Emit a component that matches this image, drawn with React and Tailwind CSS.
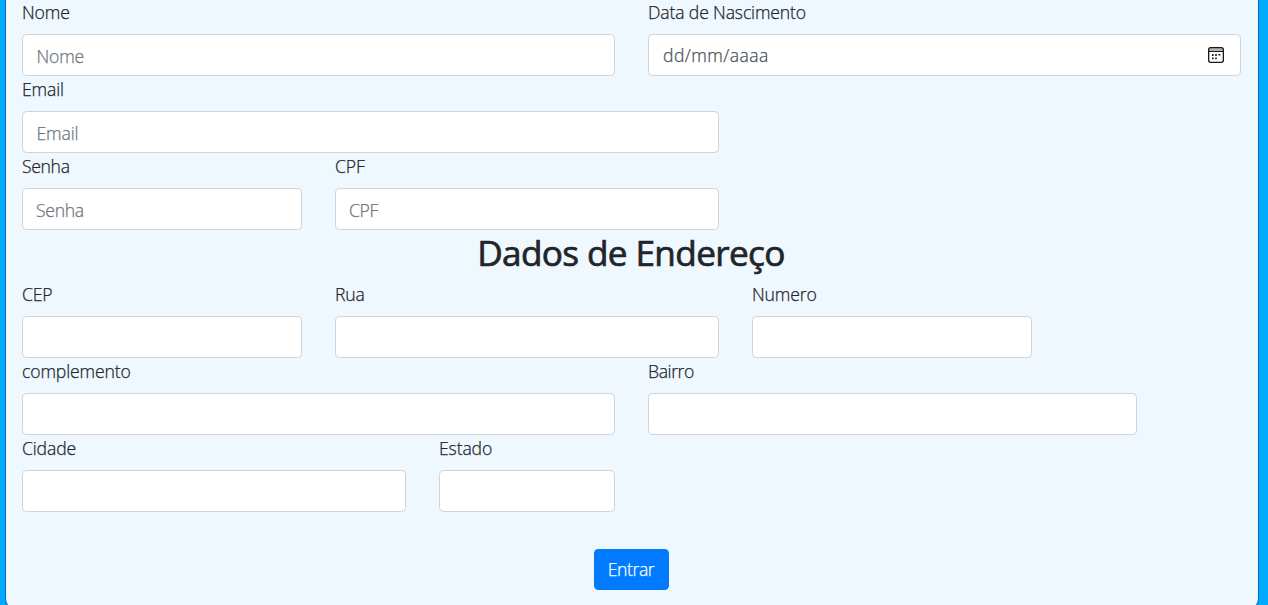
function CalendarIcon() {
  return (
    <svg width="16" height="16" viewBox="0 0 16 16" fill="none" className="shrink-0">
      <rect x="1" y="1" width="14" height="3" fill="#b5b5b5" />
      <rect x="0.65" y="0.65" width="14.7" height="14.7" rx="2" stroke="#16191c" strokeWidth="1.3" />
      <path d="M1 4.5H15" stroke="#16191c" strokeWidth="1" />
      <path d="M4 7h1.6v2H4zM7.2 7h1.6v2H7.2zM10.4 7h2v1.6h-2zM4 10.5h1.6v1.7H4zM7.2 10.5h1.6v1.7H7.2z" fill="#16191c" />
    </svg>
  );
}

function Field({ label, width, labelClass = "tracking-[-0.14px]", hint, hintClass = "pt-0.5 pl-[1.5px] tracking-[-0.15px]", icon }) {
  return (
    <div className={`${width} shrink-0`}>
      <label className={`block h-[26px] w-max whitespace-nowrap leading-[24px] ${labelClass}`}>{label}</label>
      <div className="mt-2 flex h-[42px] items-center justify-between rounded-[4.4px] border border-[#ced4da] bg-white pr-4 pl-[12px] text-[#6c757d]">
        <span className={`whitespace-nowrap ${hintClass}`}>{hint}</span>
        {icon}
      </div>
    </div>
  );
}

function Row({ children }) {
  return <div className="flex h-[77px] gap-[33px]">{children}</div>;
}

export default function App() {
  return (
    <div className="h-[605px] overflow-hidden bg-[#00aaff] pr-[9px] pl-[5px] font-['Open_Sans','Noto_Sans',sans-serif] text-[17.6px] font-light text-[#212529] [-webkit-text-stroke:0.25px]">
      <main className="h-[612px] rounded-b-[14px] border-x border-b border-[#0b66b5] bg-[#eff7ff] pl-4">
        <Row>
          <Field label="Nome" width="w-[593px]" hint="Nome" />
          <Field label="Data de Nascimento" width="w-[593px]" hint="dd/mm/aaaa" hintClass="pt-px pl-0.5 text-[#495057] tracking-[0.45px]" icon={<CalendarIcon />} />
        </Row>
        <Row>
          <Field label="Email" width="w-[697px]" hint="Email" />
        </Row>
        <Row>
          <Field label="Senha" labelClass="tracking-[-0.35px]" width="w-[280px]" hint="Senha" hintClass="pt-0.5 pl-px tracking-[-0.3px]" />
          <Field label="CPF" width="w-[384px]" hint="CPF" hintClass="pt-0.5 pl-px tracking-[-0.3px]" />
        </Row>
        <h1 className="mr-[18px] h-[51px] text-center text-[35.2px] leading-[42px] font-normal tracking-[-0.65px] [-webkit-text-stroke:0.7px]">Dados de Endereço</h1>
        <Row>
          <Field label="CEP" width="w-[280px]" />
          <Field label="Rua" width="w-[384px]" />
          <Field label="Numero" width="w-[280px]" />
        </Row>
        <Row>
          <Field label="complemento" width="w-[593px]" />
          <Field label="Bairro" labelClass="tracking-[-0.4px]" width="w-[489px]" />
        </Row>
        <Row>
          <Field label="Cidade" width="w-[384px]" />
          <Field label="Estado" width="w-[176px]" />
        </Row>
        <div className="mt-9 mr-[18px] flex justify-center">
          <button className="h-[41px] w-[75px] rounded-[4.4px] bg-[#007bff] tracking-[-0.4px] text-white [-webkit-text-stroke:0.25px]">Entrar</button>
        </div>
      </main>
    </div>
  );
}
